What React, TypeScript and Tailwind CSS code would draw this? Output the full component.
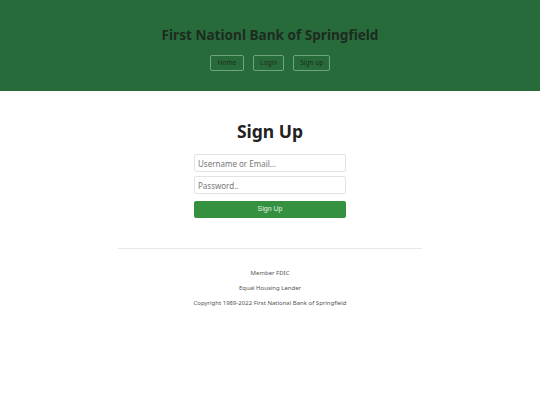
export default function App() {
    return (
        <div className="min-h-[405px] bg-white font-['Noto_Sans',sans-serif]">
            <header className="h-[91px] bg-[#286b3b] flex flex-col items-center pt-[25px]">
                <h1 className="text-[13.6px] leading-[20px] font-bold text-[#1d2b20]">
                    First Nationl Bank of Springfield
                </h1>
                <nav className="flex gap-[9px] mt-[10px]">
                    <a className="h-[16px] px-[7px] flex items-center border border-[#6fa57d] rounded-[2px] text-[6.5px] text-[#1d2b20]">
                        Home
                    </a>
                    <a className="h-[16px] px-[6px] flex items-center border border-[#6fa57d] rounded-[2px] text-[6.5px] text-[#1d2b20]">
                        Login
                    </a>
                    <a className="h-[16px] px-[6px] flex items-center border border-[#6fa57d] rounded-[2px] text-[6.5px] text-[#1d2b20]">
                        Sign up
                    </a>
                </nav>
            </header>

            <main className="flex flex-col items-center pt-[28px]">
                <h2 className="text-[17.5px] leading-[24px] font-bold text-[#222]">Sign Up</h2>
                <form className="w-[152px] flex flex-col mt-[11px]">
                    <input
                        placeholder="Username or Email..."
                        className="h-[18px] px-[3px] border border-[#e3e3e3] rounded-[2px] text-[8px] placeholder:text-[#777] outline-none"
                    />
                    <input
                        placeholder="Password.."
                        className="h-[18px] px-[3px] mt-[4px] border border-[#e3e3e3] rounded-[2px] text-[8px] placeholder:text-[#777] outline-none"
                    />
                    <button
                        type="button"
                        className="h-[17px] mt-[7px] bg-[#33913f] rounded-[2px] text-[7px] text-[#e6f2e8] font-['Liberation_Sans',sans-serif]"
                    >
                        Sign Up
                    </button>
                </form>
            </main>

            <footer className="w-[304px] mx-auto mt-[30px] border-t border-[#e8e8e8] flex flex-col items-center pt-[20px] gap-[7px] text-[6px] leading-[8px] text-[#555]">
                <div>Member FDIC</div>
                <div>Equal Housing Lender</div>
                <div>Copyright 1989-2022 First National Bank of Springfield</div>
            </footer>
        </div>
    );
}
